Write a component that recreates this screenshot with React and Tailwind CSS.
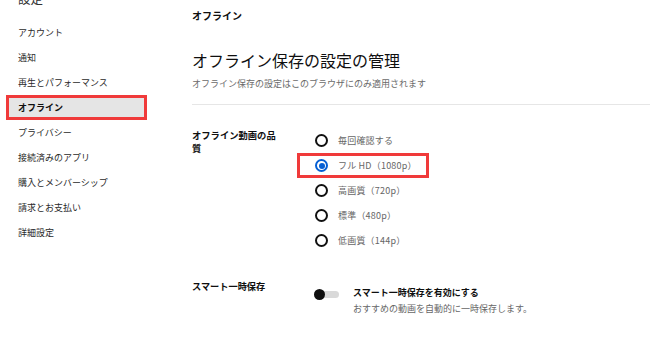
import React from "react";

const menu = [
  "アカウント",
  "通知",
  "再生とパフォーマンス",
  "オフライン",
  "プライバシー",
  "接続済みのアプリ",
  "購入とメンバーシップ",
  "請求とお支払い",
  "詳細設定",
];

const qualities = [
  "毎回確認する",
  "フル HD（1080p）",
  "高画質（720p）",
  "標準（480p）",
  "低画質（144p）",
];

function Radio({ checked }) {
  if (checked) {
    return (
      <span className="w-[13px] h-[13px] rounded-full border-[2px] border-[#065fd4] flex items-center justify-center">
        <span className="w-[6px] h-[6px] rounded-full bg-[#065fd4]" />
      </span>
    );
  }
  return <span className="w-[13px] h-[13px] rounded-full border-[2px] border-[#111]" />;
}

export default function App() {
  const selected = 1;
  const active = "オフライン";

  return (
    <div
      className="w-[650px] h-[350px] overflow-hidden bg-white flex text-[#0f0f0f]"
      style={{ fontFamily: '"Noto Sans CJK JP", "Noto Sans", sans-serif' }}
    >
      {/* sidebar */}
      <div className="w-[141px] ml-[6px] shrink-0">
        <div className="-mt-[7px] pl-[12px] text-[12.5px] leading-[12px] text-[#333]">設定</div>
        <div className="mt-[15px] flex flex-col">
          {menu.map((m) => (
            <div
              key={m}
              className={
                m === active
                  ? "h-[25px] flex items-center pl-[9px] border-[3px] border-[#f03a3a] bg-[#e5e5e5] text-[9px] font-bold text-[#0f0f0f]"
                  : "h-[25px] flex items-center pl-[9px] border-[3px] border-transparent text-[9px] text-[#2a2a2a]"
              }
            >
              {m}
            </div>
          ))}
        </div>
      </div>

      {/* main */}
      <div className="flex-1 ml-[45px] pt-[9px]">
        <div className="text-[10px] leading-[14px] font-bold">オフライン</div>
        <div className="mt-[26px] text-[16px] leading-[22px]">オフライン保存の設定の管理</div>
        <div className="mt-[6px] text-[9px] leading-[14px] text-[#6a6a6a]">
          オフライン保存の設定はこのブラウザにのみ適用されます
        </div>
        <div className="mt-[13px] border-t border-[#e6e6e6]" />

        <div className="mt-[23px] flex">
          <div className="w-[105px] shrink-0">
            <div className="w-[92px] text-[9.3px] leading-[13px] font-bold mt-[0.5px]">
              オフライン動画の品質
            </div>
          </div>
          <div className="flex flex-col">
            {qualities.map((q, i) => (
              <div
                key={q}
                className={
                  i === selected
                    ? "w-fit h-[25px] flex items-center pl-[15px] pr-[9px] border-[3px] border-[#f03a3a]"
                    : "w-fit h-[25px] flex items-center pl-[15px] pr-[9px] border-[3px] border-transparent"
                }
              >
                <Radio checked={i === selected} />
                <span className="ml-[10px] text-[9px] tracking-[0.2px] text-[#666]">{q}</span>
              </div>
            ))}
          </div>
        </div>

        <div className="mt-[27px] flex">
          <div className="w-[105px] shrink-0 text-[9.2px] leading-[13px] font-bold">スマート一時保存</div>
          <div className="flex items-start">
            <div className="ml-[17px] mt-[8px] relative w-[25px] h-[12px] flex items-center">
              <span className="ml-[3px] w-[22px] h-[7px] rounded-full bg-[#d9d9d9]" />
              <span className="absolute left-0 top-[0.5px] w-[11px] h-[11px] rounded-full bg-[#0f0f0f]" />
            </div>
            <div className="ml-[14px] mt-[6px]">
              <div className="text-[9px] leading-[14px] font-bold">スマート一時保存を有効にする</div>
              <div className="mt-[1px] text-[9px] leading-[16px] text-[#666]">
                おすすめの動画を自動的に一時保存します。
              </div>
            </div>
          </div>
        </div>
      </div>
    </div>
  );
}
